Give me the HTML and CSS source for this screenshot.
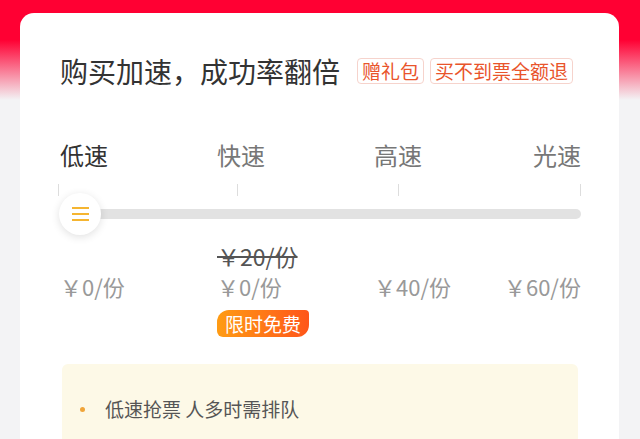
FILE: index.html
```html
<!DOCTYPE html>
<html lang="zh-CN">
<head>
  <meta charset="UTF-8">
  <meta name="viewport" content="width=device-width, initial-scale=1.0">
  <title>抢票加速</title>
  <link rel="stylesheet" href="styles.css">
</head>
<body>

  <!-- 加速包卡片 -->
  <div class="speed-card">
    <div class="card-head">
      <h1>购买加速，成功率翻倍</h1>
      <span class="tag">赠礼包</span>
      <span class="tag">买不到票全额退</span>
    </div>

    <!-- 速度档位 -->
    <div class="speed-labels">
      <span class="active">低速</span>
      <span>快速</span>
      <span>高速</span>
      <span class="last">光速</span>
    </div>

    <div class="ticks">
      <i></i><i></i><i></i><i></i>
    </div>

    <div class="track">
      <div class="thumb">
        <b></b><b></b><b></b>
      </div>
    </div>

    <!-- 价格 -->
    <div class="prices">
      <span class="old">￥20/份</span>
      <span class="price p1">￥0/份</span>
      <span class="price p2">￥0/份</span>
      <span class="price p3">￥40/份</span>
      <span class="price p4">￥60/份</span>
      <span class="badge">限时免费</span>
    </div>

    <!-- 说明 -->
    <div class="tips">
      <div class="tip-item">低速抢票 人多时需排队</div>
    </div>
  </div>

</body>
</html>
```

FILE: styles.css
```css
body {
  margin: 0;
  padding: 0;
  height: 439px;
  overflow: hidden;
  font-family: "Noto Sans CJK SC", "Noto Sans", sans-serif;
  background: linear-gradient(#ff0033 0, #ff0033 40px, #f3f3f5 100px, #f3f3f5 100%);
}

.speed-card {
  margin: 13px 21px 0 20px;
  height: 426px;
  overflow: hidden;
  background-color: #fff;
  border-radius: 14px 14px 0 0;
  padding: 40px 38px 0 40px;
  box-sizing: border-box;
}

.card-head {
  display: flex;
  align-items: center;
  height: 36px;
}

h1 {
  margin: 0 17px 0 0;
  font-size: 28px;
  font-weight: 400;
  line-height: 36px;
  color: #333;
}

.tag {
  font-size: 19px;
  line-height: 24px;
  padding: 0 4px;
  color: #e9542b;
  border: 1px solid #f6d3cc;
  border-radius: 4px;
  margin-right: 6px;
}

/* 速度档位 */
.speed-labels {
  display: grid;
  grid-template-columns: 157px 157px 157px 1fr;
  margin-top: 49px;
  font-size: 24px;
  line-height: 34px;
  color: #777;
}

.speed-labels .active {
  color: #333;
}

.speed-labels .last {
  justify-self: end;
}

.ticks {
  display: grid;
  grid-template-columns: 179fr 162fr 182fr 1px;
  margin: 12px 0 0 -2px;
  height: 12px;
}

.ticks i {
  width: 1px;
  height: 12px;
  background-color: #ddd;
}

.track {
  position: relative;
  margin-top: 13px;
  height: 10px;
  border-radius: 5px;
  background: linear-gradient(to right, #ffc21a 0, #ffc21a 20px, #e2e2e2 20px);
}

.thumb {
  position: absolute;
  left: -1px;
  top: -16px;
  width: 42px;
  height: 42px;
  border-radius: 50%;
  background-color: #fff;
  box-shadow: 0 2px 8px rgba(0, 0, 0, 0.12);
  display: flex;
  flex-direction: column;
  justify-content: center;
  align-items: center;
  gap: 4px;
}

.thumb b {
  width: 17px;
  height: 2px;
  background-color: #f5b531;
}

/* 价格 */
.prices {
  display: grid;
  grid-template-columns: 157px 157px 1fr auto;
  grid-template-rows: 30px 30px auto;
  margin-top: 22px;
  font-size: 22px;
  line-height: 30px;
  color: #999;
  white-space: nowrap;
}

.old {
  grid-column: 2;
  grid-row: 1;
  color: #555;
  font-size: 23px;
  text-decoration: line-through;
}

.price { grid-row: 2; }
.p1 { grid-column: 1; }
.p2 { grid-column: 2; }
.p3 { grid-column: 3; }
.p4 { grid-column: 4; }

.badge {
  grid-column: 2;
  grid-row: 3;
  justify-self: start;
  margin-top: 9px;
  padding: 0 8px;
  font-size: 19px;
  line-height: 27px;
  color: #fff;
  border-radius: 12px 4px 12px 6px;
  background: linear-gradient(to right, #ff9c14, #ff5519);
}

/* 说明 */
.tips {
  margin: 27px 3px 0 2px;
  height: 120px;
  padding: 31px 0 0 18px;
  background-color: #fdf9e7;
  border-radius: 6px;
}

.tip-item {
  display: flex;
  align-items: center;
  font-size: 19px;
  line-height: 28px;
  color: #555;
}

.tip-item::before {
  content: "";
  width: 5px;
  height: 5px;
  border-radius: 50%;
  background-color: #f0a53a;
  margin-right: 20px;
}
```
